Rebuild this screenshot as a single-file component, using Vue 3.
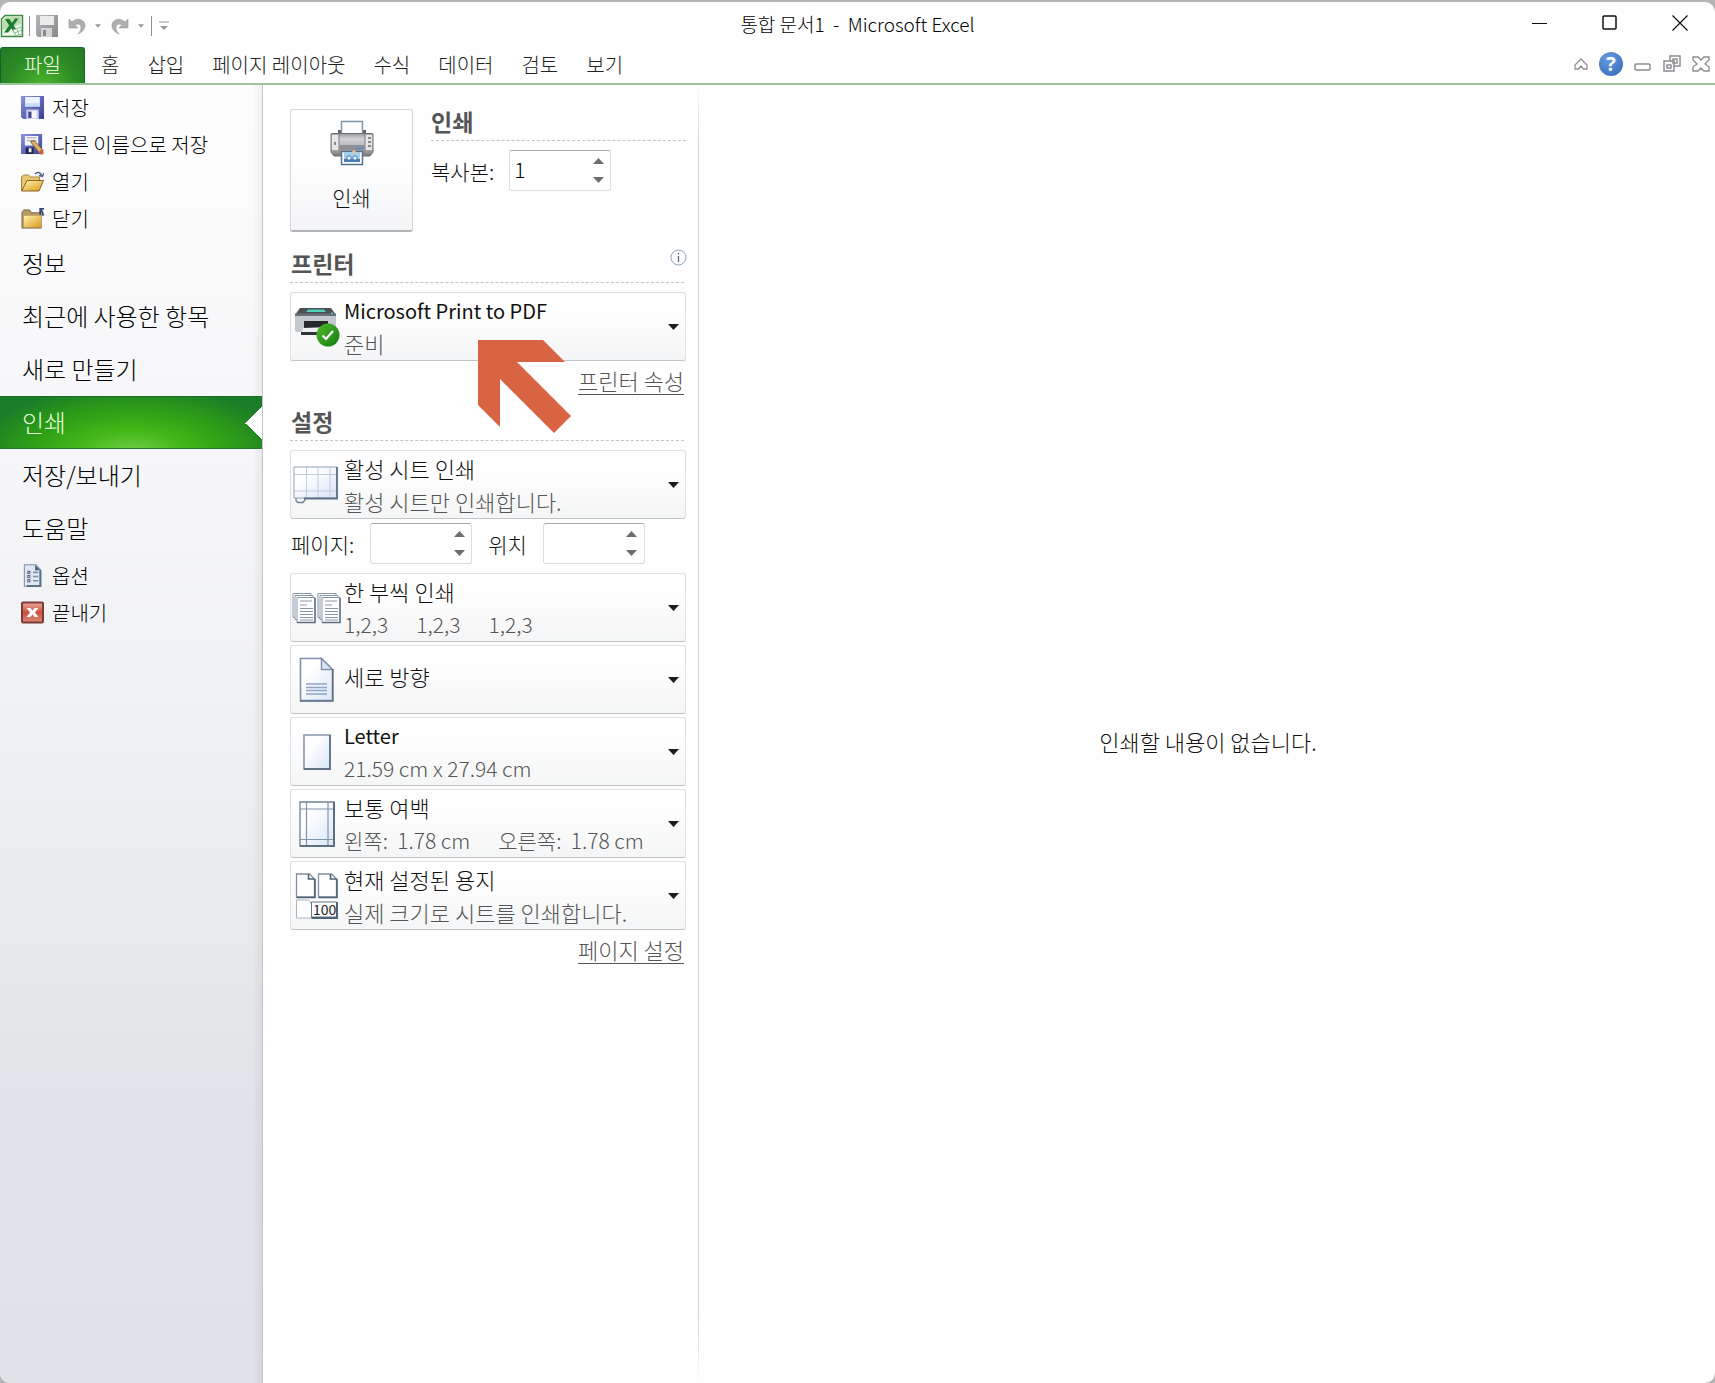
<script setup>
import { ref } from 'vue'

const tabs = ['홈', '삽입', '페이지 레이아웃', '수식', '데이터', '검토', '보기']

const fileActions = [
  { icon: 'save', label: '저장' },
  { icon: 'save-as', label: '다른 이름으로 저장' },
  { icon: 'open', label: '열기' },
  { icon: 'close-file', label: '닫기' }
]
const places = ['정보', '최근에 사용한 항목', '새로 만들기', '인쇄', '저장/보내기', '도움말']
const appActions = [
  { icon: 'options', label: '옵션' },
  { icon: 'exit', label: '끝내기' }
]
const active = ref('인쇄')

const pickers = [
  { icon: 'collate', title: '한 부씩 인쇄', parts: ['1,2,3', '1,2,3', '1,2,3'], latinDetail: true },
  { icon: 'portrait', title: '세로 방향', parts: [] },
  { icon: 'letter', title: 'Letter', parts: ['21.59 cm x 27.94 cm'], latinTitle: true, latinDetail: true },
  { icon: 'margins', title: '보통 여백', parts: ['왼쪽:  1.78 cm', '오른쪽:  1.78 cm'], latinDetail: true },
  { icon: 'scaling', title: '현재 설정된 용지', parts: ['실제 크기로 시트를 인쇄합니다.'] }
]

const copies = ref('1')
const pageFrom = ref('')
const pageTo = ref('')
const step = (value, by) => String(Math.max(1, (parseInt(value) || 0) + by))
</script>

<template>
  <div class="desktop">
    <svg class="defs" width="0" height="0" aria-hidden="true">
      <defs>
        <linearGradient id="g-blue" x1="0" y1="0" x2="1" y2="1"><stop offset="0" stop-color="#8c93e0" /><stop offset="1" stop-color="#3a3f94" /></linearGradient>
        <linearGradient id="g-grey" x1="0" y1="0" x2="1" y2="1"><stop offset="0" stop-color="#b9b6ba" /><stop offset="1" stop-color="#8b888c" /></linearGradient>
        <linearGradient id="g-gold" x1="0" y1="0" x2="1" y2="1"><stop offset="0" stop-color="#fff3b0" /><stop offset="1" stop-color="#dd9a1c" /></linearGradient>
        <linearGradient id="g-paper" x1="0" y1="0" x2="1" y2="1"><stop offset="0.3" stop-color="#ffffff" /><stop offset="1" stop-color="#d9e5f8" /></linearGradient>
        <linearGradient id="g-metal" x1="0" y1="0" x2="0" y2="1"><stop offset="0" stop-color="#9a9b9e" /><stop offset="0.25" stop-color="#d3d3d5" /><stop offset="0.7" stop-color="#a9aaad" /><stop offset="1" stop-color="#77787c" /></linearGradient>
        <linearGradient id="g-red" x1="0" y1="0" x2="0" y2="1"><stop offset="0" stop-color="#eda79c" /><stop offset="0.5" stop-color="#c9523f" /><stop offset="1" stop-color="#e08a78" /></linearGradient>
        <linearGradient id="g-ok" x1="0" y1="0" x2="1" y2="1"><stop offset="0" stop-color="#4fbb2c" /><stop offset="1" stop-color="#157a12" /></linearGradient>
      </defs>
      <symbol id="excel" viewBox="0 0 24 24">
        <path d="M5 1.5h17.5v21h-21V5z" fill="#eef7ea" stroke="#3f8a45" stroke-width="1.5" />
        <path d="M6 3h15v7L3 16V6z" fill="#b9dfae" />
        <path d="M5 5h4.5l2.500 4 3-4.500h3.500l-5 7 5.500 7h-4.800l-3-4.200-3 4.200H4l5.200-7z" fill="#1e7a2e" />
        <path d="m13 16 8-3 1 7-6 2z" fill="#fff" stroke="#8cc08a" />
        <path d="m14 19 8-3M17 15l2 6" stroke="#8cc08a" />
      </symbol>
      <symbol id="floppy-grey" viewBox="0 0 22 22">
        <path d="M0 0h22v22H2l-2-2z" fill="url(#g-grey)" />
        <path d="M4 1h14v9H4z" fill="#eceaed" /><path d="M5 13h11v9H5z" fill="#d6d4d8" /><path d="M7 15h3v6H7z" fill="#8b888c" />
      </symbol>
      <symbol id="undo" viewBox="0 0 18 18">
        <path d="M1 2v9h9l-3-3c3-2 6-.5 6 2.500 0 2.500-1 4.500-3 6.500 4-1.500 7-4.500 7-8.500C17 2.500 9 0 4 5z" fill="#b1aeb2" stroke="#9a979b" stroke-width=".6" />
      </symbol>
      <symbol id="save" viewBox="0 0 22 22">
        <path d="M0 0h22v22H2l-2-2z" fill="url(#g-blue)" />
        <path d="M4 1h14v9H4z" fill="#eef4ff" /><path d="M4 7h14v3H4z" fill="#c8dbf7" />
        <path d="M5 13h12v9H5z" fill="#c9cde8" /><path d="M10 14h5v7h-5z" fill="#f6f7fc" /><path d="M7 15h3v6H7z" fill="#44498f" />
      </symbol>
      <symbol id="save-as" viewBox="0 0 24 22">
        <path d="M0 0h22v21H0z" fill="url(#g-blue)" />
        <path d="M4 2h14v10H4z" fill="#f4f4f8" /><path d="M6 4h10M6 7h10" stroke="#9aa0b4" />
        <path d="M5 14h8v7H5z" fill="#20244a" /><path d="M8 15h3v4H8z" fill="#e8eaf4" />
        <path d="m10 8 4-1 9 10-3 4z" fill="#d9b36a" stroke="#80602c" /><path d="m19 18 3-2 2 4-3 2z" fill="#c0604f" />
      </symbol>
      <symbol id="open" viewBox="0 0 23 21">
        <path d="M.5 20V6l2-2h5l2 2h9v4" fill="#e8c871" stroke="#a58543" />
        <path d="M.7 20 6 9.500h16.500L18 20z" fill="url(#g-gold)" stroke="#8a6420" />
        <path d="M14 3c3-3 6-1 7 2m-3-.5 3.500 1L23 2" fill="none" stroke="#51648c" stroke-width="1.400" />
      </symbol>
      <symbol id="close-file" viewBox="0 0 24 22">
        <path d="M1 21V4l2-2h6l2 3h10v16z" fill="#b49a63" stroke="#7c6b46" /><path d="M3 8h18v12H3z" fill="url(#g-gold)" />
        <path d="M23 8c0-4-1-5-3-6m0 5V1h4" fill="none" stroke="#35466f" stroke-width="1.800" />
      </symbol>
      <symbol id="options" viewBox="0 0 17 22">
        <path d="M.7.700H12l4.300 5v15.600H.700z" fill="#dfe7f0" stroke="#7f90a6" /><path d="M16 6v15H3" fill="none" stroke="#5d7188" stroke-width="2" />
        <path d="M11 1v5h5z" fill="#4a5c74" />
        <g fill="none" stroke="#55687f"><rect x="4" y="7" width="2" height="2" /><rect x="4" y="11" width="2" height="2" /><rect x="4" y="15" width="2" height="2" /></g>
        <path d="M9 8h5M9 12h5M9 16h5" stroke="#7f90a6" stroke-width="1.500" />
      </symbol>
      <symbol id="exit" viewBox="0 0 23 22">
        <rect x="1" y="1" width="21" height="20" rx="1" fill="url(#g-red)" stroke="#7d3d36" stroke-width="2" />
        <path d="M5.500 6.500h4l2 2.500 2-2.500h4L14 11l3.500 4.500h-4l-2-2.500-2 2.500h-4L9 11z" fill="#fff" />
      </symbol>
      <symbol id="printer" viewBox="0 0 44 46">
        <path d="M8 10h4v6H8zM32 10h4v6h-4z" fill="#5f6468" />
        <path d="M11.500 1.500h21V16h-21z" fill="#fbfdff" stroke="#7f95a6" stroke-width="1.500" />
        <path d="M2 13.500h40q1 0 1 1V32l-3 4H4l-3-4V14.500q0-1 1-1z" fill="url(#g-metal)" stroke="#6d7073" />
        <path d="M2 15h7v15H2zM35 15h7v15h-7z" fill="#e6e6e8" /><path d="M9 14v17M35 14v17" stroke="#77797d" />
        <path d="M10 25h24v5H10z" fill="#909195" /><path d="M26 27h8v2h-8z" fill="#658fc2" />
        <path d="M4 22h2v3H4zM38 17h3v2h-3zM38 21h3v2h-3zM38 25h3v2h-3z" fill="#85878b" />
        <path d="M11.500 31.500h21v13h-21z" fill="#fff" stroke="#54708c" stroke-width="1.500" />
        <path d="M14 32h16v10H14z" fill="#9fd0ef" /><path d="M14 39h16v3H14z" fill="#4a7ab5" />
        <circle cx="19" cy="38" r="2.200" fill="#e8f4fc" stroke="#4a7ab5" /><circle cx="25" cy="38" r="2.200" fill="#e8f4fc" stroke="#4a7ab5" /><circle cx="24" cy="32" r="1.800" fill="#f3c2a2" />
      </symbol>
      <symbol id="device" viewBox="0 0 46 40">
        <path d="M6 1h31l5 7H1z" fill="#4b5054" /><path d="M14 2.500h16l2 2.500H12z" fill="#4fd0b8" />
        <path d="M1 8h41v15q0 2-2 2H3q-2 0-2-2z" fill="#c3c9cf" /><path d="M1 6.500h41V9H1z" fill="#6a7076" /><path d="M37 5.500h2v1.500h-2z" fill="#4be08a" />
        <path d="M10 14h24v10H10z" fill="#26292c" /><path d="m9 21 27-1v4l-29 4z" fill="#eef1f4" /><path d="M7 25h26v3H7z" fill="#303438" />
        <circle cx="34" cy="28" r="11.500" fill="url(#g-ok)" /><path d="m28.500 28.500 3.500 3.500 7-8" fill="none" stroke="#fff" stroke-width="2.200" />
      </symbol>
      <symbol id="sheet" viewBox="0 0 46 38">
        <path d="M3 32v3l2 1.500h5l2-2.500v-2" fill="#f4f8fd" stroke="#6c8096" stroke-width="1.300" />
        <path d="M1 1h43v31H1z" fill="url(#g-paper)" stroke="#8fa2b8" />
        <path d="M1 8.500h43M1 25h43M13.500 1v31M25 1v31M37 1v31" stroke="#bccbdf" />
        <path d="M44 1v31.500H11" fill="none" stroke="#5d7188" stroke-width="1.800" />
      </symbol>
      <symbol id="collate" viewBox="0 0 50 32">
        <g v-for="x in [0, 25]" :key="x" fill="#fff" stroke="#8797a8">
          <path :d="`M${x + 1} 1.500h18v24h-18z`" />
          <path :d="`M${x + 3} 3.500h18v24h-18z`" />
          <path :d="`M${x + 5} 5.500h18v25h-18z`" />
          <path :d="`M${x + 23} 6v24.500h-18`" fill="none" stroke="#5c6d7e" stroke-width="1.400" />
          <path :d="`M${x + 8} 9h12M${x + 8} 13h7M${x + 8} 16.500h13M${x + 8} 19.500h13M${x + 8} 22.500h13M${x + 8} 25.500h13M${x + 8} 28h13`" />
        </g>
      </symbol>
      <symbol id="portrait" viewBox="0 0 36 46">
        <path d="M1.500 1.500h21l11 11v31h-32z" fill="url(#g-paper)" stroke="#8090ac" stroke-width="1.600" />
        <path d="M22.500 1.500v11h11z" fill="#dbe5f2" stroke="#8090ac" stroke-width="1.400" />
        <path d="M33.800 12v32H1" fill="none" stroke="#5f7086" stroke-width="1.600" />
        <path d="M7 27h21M7 30.500h21M7 33.500h21M7 37h21" stroke="#8fa3cb" stroke-width="1.400" />
      </symbol>
      <symbol id="letter" viewBox="0 0 28 36">
        <path d="M1 1h26v34H1z" fill="url(#g-paper)" stroke="#8797ae" stroke-width="1.600" /><path d="M27 1v34H1" fill="none" stroke="#61728a" stroke-width="1.800" />
      </symbol>
      <symbol id="margins" viewBox="0 0 36 46">
        <path d="M1 1h34v44H1z" fill="url(#g-paper)" stroke="#6f8296" stroke-width="1.300" /><path d="M7.500 1v44M29 1v44M1 8h34M1 38.500h34" stroke="#8094aa" stroke-width="1.200" />
        <path d="M35 1v44H1" fill="none" stroke="#4c5f73" stroke-width="1.600" />
      </symbol>
      <symbol id="scaling" viewBox="0 0 43 46">
        <g v-for="x in [0, 22]" :key="x">
          <path :d="`M${x + 1} 1h13l5 5v18h-18z`" fill="#fff" stroke="#8090a2" stroke-width="1.300" />
          <path :d="`M${x + 19.5} 6v18.500h-18.500M${x + 13} 1v5h6`" fill="none" stroke="#4f6376" stroke-width="1.600" />
        </g>
        <path d="M1 45V27h12l3 4v14z" fill="#fff" stroke="#a9b4bf" /><path d="M16 29h25v15H16z" fill="#fff" stroke="#61778a" /><path d="M41.500 29v16H16" fill="none" stroke="#4f6376" stroke-width="2" />
      </symbol>
      <symbol id="spin-up" viewBox="0 0 11 6"><path d="M0 6 5.500 0 11 6z" fill="#6d6d6d" /></symbol>
      <symbol id="caret" viewBox="0 0 11 6"><path d="M0 0h11L5.500 6z" fill="currentColor" /></symbol>
    </svg>

    <div class="window">
      <header class="titlebar">
        <div class="quick">
          <svg class="i24"><use href="#excel" /></svg>
          <i class="bar"></i>
          <button class="plain" aria-label="저장"><svg class="i22"><use href="#floppy-grey" /></svg></button>
          <button class="plain" aria-label="실행 취소"><svg class="i18"><use href="#undo" /></svg></button>
          <svg class="mini"><use href="#caret" /></svg>
          <button class="plain flip" aria-label="다시 실행"><svg class="i18"><use href="#undo" /></svg></button>
          <svg class="mini"><use href="#caret" /></svg>
          <i class="bar last"></i>
          <button class="plain" aria-label="빠른 실행 도구 모음 사용자 지정">
            <svg width="10" height="10" viewBox="0 0 10 10"><path d="M0 1h10" stroke="#999" /><path d="M1 5h8L5 9z" fill="#999" /></svg>
          </button>
        </div>
        <h1>통합 문서1&nbsp; -&nbsp; Microsoft Excel</h1>
        <div class="controls">
          <button class="plain" aria-label="최소화"><svg width="16" height="16"><path d="M0 8.500h15" stroke="#111" /></svg></button>
          <button class="plain" aria-label="최대화"><svg width="16" height="16"><rect x="1" y="1" width="13" height="13" rx="1" fill="none" stroke="#111" stroke-width="1.500" /></svg></button>
          <button class="plain" aria-label="닫기"><svg width="16" height="16"><path d="m.5.500 15 15m0-15-15 15" stroke="#111" stroke-width="1.200" /></svg></button>
        </div>
      </header>

      <nav class="ribbon">
        <button class="file">파일</button>
        <button v-for="tab in tabs" :key="tab" class="tab">{{ tab }}</button>
        <div class="tools">
          <button class="plain" aria-label="리본 최소화"><svg width="14" height="14"><path d="M1 12V8l6-6 6 6v4H9.500L7 9l-2.500 3z" fill="#fff" stroke="#8e8e93" stroke-width="1.300" /></svg></button>
          <button class="help" aria-label="도움말">?</button>
          <button class="plain" aria-label="창 최소화"><svg width="18" height="18"><rect x="1" y="9" width="15" height="6" rx="1" fill="#fff" stroke="#8e8e93" stroke-width="1.500" /></svg></button>
          <button class="plain" aria-label="창 복원"><svg width="18" height="18"><g fill="#fff" stroke="#8e8e93" stroke-width="1.500"><path d="M7 1h10v10H7z" /><path d="M10 4h4v4h-4zM1 6h10v10H1z" /><path d="M4 10h4v3H4z" /></g></svg></button>
          <button class="plain" aria-label="창 닫기"><svg width="18" height="16"><path d="M1 1h5l3 3 3-3h5v3l-4 4 4 3v4h-5l-3-3-3 3H1v-4l4-3-4-4z" fill="#fff" stroke="#8e8e93" stroke-width="1.400" /></svg></button>
        </div>
      </nav>

      <div class="backstage">
        <nav class="side">
          <button v-for="a in fileActions" :key="a.icon" class="small">
            <svg><use :href="'#' + a.icon" /></svg>{{ a.label }}
          </button>
          <button v-for="p in places" :key="p" class="place" :class="{ active: active === p }" @click="active = p">{{ p }}</button>
          <div class="app-actions">
            <button v-for="a in appActions" :key="a.icon" class="small">
              <svg><use :href="'#' + a.icon" /></svg>{{ a.label }}
            </button>
          </div>
        </nav>

        <section class="settings">
          <div class="print-row">
            <button class="print"><svg width="44" height="46"><use href="#printer" /></svg>인쇄</button>
            <div class="print-side">
              <h2>인쇄</h2>
              <div class="field">
                <label for="copies">복사본:</label>
                <div class="spin">
                  <input id="copies" v-model="copies" type="text" inputmode="numeric" />
                  <div class="arrows">
                    <button aria-label="늘리기" @click="copies = step(copies, 1)"><svg><use href="#spin-up" /></svg></button>
                    <button aria-label="줄이기" @click="copies = step(copies, -1)"><svg class="down"><use href="#spin-up" /></svg></button>
                  </div>
                </div>
              </div>
            </div>
          </div>

          <div class="head">
            <h2>프린터</h2>
            <svg class="info" width="17" height="17"><circle cx="8.500" cy="8.500" r="7.500" fill="#fff" stroke="#8ba3c0" /><path d="M8.500 7v6M8.500 4v1.500" stroke="#4b6a92" stroke-width="1.300" /></svg>
          </div>
          <div class="picker">
            <svg class="pic"><use href="#device" width="46" height="40" x="2" y="7" /></svg>
            <div class="words">
              <select class="latin" aria-label="프린터"><option>Microsoft Print to PDF</option></select>
              <p>준비</p>
            </div>
            <svg class="caret"><use href="#caret" /></svg>
          </div>
          <div class="link-row"><a href="#printer-properties">프린터 속성</a></div>

          <div class="head"><h2>설정</h2></div>
          <div class="picker">
            <svg class="pic"><use href="#sheet" width="46" height="38" x="1" y="8" /></svg>
            <div class="words">
              <select aria-label="인쇄 대상"><option>활성 시트 인쇄</option></select>
              <p>활성 시트만 인쇄합니다.</p>
            </div>
            <svg class="caret"><use href="#caret" /></svg>
          </div>
          <div class="pages">
            <label for="from">페이지:</label>
            <div class="spin">
              <input id="from" v-model="pageFrom" type="text" inputmode="numeric" />
              <div class="arrows">
                <button aria-label="늘리기" @click="pageFrom = step(pageFrom, 1)"><svg><use href="#spin-up" /></svg></button>
                <button aria-label="줄이기" @click="pageFrom = step(pageFrom, -1)"><svg class="down"><use href="#spin-up" /></svg></button>
              </div>
            </div>
            <label for="to">위치</label>
            <div class="spin">
              <input id="to" v-model="pageTo" type="text" inputmode="numeric" />
              <div class="arrows">
                <button aria-label="늘리기" @click="pageTo = step(pageTo, 1)"><svg><use href="#spin-up" /></svg></button>
                <button aria-label="줄이기" @click="pageTo = step(pageTo, -1)"><svg class="down"><use href="#spin-up" /></svg></button>
              </div>
            </div>
          </div>
          <div class="stack">
            <div v-for="p in pickers" :key="p.icon" class="picker">
              <svg class="pic" :class="p.icon">
                <use :href="'#' + p.icon" />
                <text v-if="p.icon === 'scaling'" x="21" y="42" font-size="14" font-weight="400" fill="#222">100</text>
              </svg>
              <div class="words" :class="{ single: !p.parts.length }">
                <select :aria-label="p.title" :class="{ latin: p.latinTitle }"><option>{{ p.title }}</option></select>
                <p v-if="p.parts.length" :class="{ figures: p.latinDetail }"><span v-for="(part, i) in p.parts" :key="i">{{ part }}</span></p>
              </div>
              <svg class="caret"><use href="#caret" /></svg>
            </div>
          </div>
          <div class="link-row"><a href="#page-setup">페이지 설정</a></div>

          <svg class="pointer" width="93" height="93" viewBox="0 0 93 93" aria-hidden="true">
            <path d="M0 0h65l22 22H39l54 54-17 17-54-54v48L0 65z" fill="#d86444" />
          </svg>
        </section>

        <main class="preview"><p>인쇄할 내용이 없습니다.</p></main>
      </div>
    </div>
  </div>
</template>

<style>
body { margin: 0; background: #b5b5b5; }
</style>

<style scoped>
.desktop {
  min-height: 100vh;
  box-sizing: border-box;
  padding-top: 2px;
  display: flex;
  background: #b5b5b5;
  font-family: "Noto Sans CJK KR", "Noto Sans", sans-serif;
  font-weight: 300;
  font-size: 22px;
  color: #111;
}
.defs { position: absolute; }
.window {
  flex: 1;
  min-width: 0;
  display: flex;
  flex-direction: column;
  background: #fefefe;
  border-radius: 10px;
  overflow: hidden;
}
button { font: inherit; color: inherit; margin: 0; padding: 0; border: 0; background: none; }
h1, h2, p { margin: 0; }
.plain { display: flex; }

.titlebar { display: grid; grid-template-columns: 1fr auto 1fr; align-items: center; height: 45px; }
.quick { display: flex; align-items: center; padding-top: 2px; color: #9a9a9a; }
.i24 { width: 24px; height: 24px; }
.i22 { width: 22px; height: 22px; }
.i18 { width: 18px; height: 18px; }
.bar { width: 1px; height: 20px; margin: 0 6px 0 5px; background: #8f8f8f; }
.quick .plain + .plain { margin-left: 10px; }
.flip { transform: scaleX(-1); }
.mini { width: 6px; height: 4px; margin: 0 10px 0 9px; }
.bar.last { margin: 0 7px 0 -3px; }
h1 { padding-bottom: 2px; font-size: 19px; font-weight: 300; color: #000; }
.controls { display: flex; justify-content: flex-end; gap: 54px; padding: 0 27px 4px 0; }

.ribbon { display: flex; align-items: stretch; height: 36px; border-bottom: 2px solid #9dc59b; font-size: 20px; color: #222; }
.file {
  width: 85px;
  padding-bottom: 2px;
  color: #f2ffec;
  border: 1px solid #17622a;
  border-bottom: 0;
  border-radius: 3px 3px 0 0;
  background: radial-gradient(ellipse at 50% 110%, #4cb62c, #2b8a25 60%, #237a26);
}
.tab { padding: 0 14px 2px; white-space: nowrap; }
.file + .tab { padding-left: 16px; }
.tools { margin-left: auto; display: flex; align-items: center; gap: 11px; padding: 0 5px 2px 0; }
.help {
  width: 24px;
  height: 24px;
  border-radius: 50%;
  background: radial-gradient(circle at 40% 30%, #6a9ce0, #2f66b8);
  color: #fff;
  font: 700 20px/24px "Open Sans", sans-serif;
}

.backstage { flex: 1; display: flex; }
.side {
  flex: none;
  width: 262px;
  padding-top: 4px;
  border-right: 1px solid #c4c7ca;
  background: linear-gradient(90deg, transparent 96%, rgba(0, 0, 0, 0.05)), linear-gradient(#fdfdfe, #f1f2f4 45%, #e0e3e7 80%, #dfe2e6);
  display: flex;
  flex-direction: column;
  color: #000;
}
.small { height: 37px; display: flex; align-items: center; gap: 8px; padding-left: 21px; font-size: 20px; }
.small svg { width: 23px; height: 23px; }
.place { height: 53px; padding: 0 0 2px 22px; text-align: left; font-size: 24px; }
.place.active {
  color: #e6ffdb;
  background:
    conic-gradient(from 45deg at 0 50%, #fefefe 90deg, transparent 0) right center / 17px 34px no-repeat,
    radial-gradient(ellipse 60% 130% at 50% 110%, #76d04c, #42b717 35%, #2b9a18 70%, #1b7d28);
  box-shadow: inset 0 1px #1c6b25, inset 0 -1px #1f7a2c;
}
.app-actions { padding-top: 2px; display: flex; flex-direction: column; }

.settings {
  position: relative;
  flex: none;
  width: 396px;
  padding: 24px 12px 0 27px;
  border-right: 1px solid;
  border-image: linear-gradient(transparent, #d0d0d0 5%, #d0d0d0 94%, transparent) 1;
}
h2 { font-size: 23px; line-height: 38px; font-weight: 700; color: #555; }
.print-row { display: flex; gap: 18px; }
.print {
  width: 123px;
  height: 123px;
  display: flex;
  flex-direction: column;
  align-items: center;
  gap: 15px;
  padding-top: 10px;
  border: 1px solid #d4d5d7;
  border-bottom: 2px solid #b3b4b6;
  border-radius: 3px;
  background: linear-gradient(#fff 40%, #f3f4f6);
  font-size: 21px;
  line-height: 32px;
}
.print-side { flex: 1; }
.print-side h2 { margin-top: -7px; border-bottom: 1px dashed #c4c4c4; }
.field { display: flex; align-items: center; gap: 15px; padding-top: 9px; font-size: 21px; }
.spin {
  width: 102px;
  height: 41px;
  box-sizing: border-box;
  display: flex;
  border: 1px solid #dcdddf;
  border-top-color: #a9a9ab;
  border-radius: 3px;
  background: #fff;
}
.spin input { flex: 1; min-width: 0; padding: 0 0 3px 4px; border: 0; outline: 0; background: none; font: inherit; color: #000; }
.arrows { display: flex; flex-direction: column; width: 24px; }
.arrows button { flex: 1; display: flex; align-items: center; justify-content: center; }
.arrows svg { width: 11px; height: 6px; }
.down { transform: scaleY(-1); }

.head { display: flex; justify-content: space-between; height: 42px; align-items: flex-end; margin: 8px 2px 9px 0; padding-left: 1px; border-bottom: 1px dashed #c4c4c4; }
.info { margin: 0 -3px 16px 0; }
.picker {
  height: 69px;
  box-sizing: border-box;
  display: flex;
  align-items: center;
  border: 1px solid #dfe0e2;
  border-bottom-color: #c2c4c6;
  border-radius: 3px;
  background: linear-gradient(#fefefe 30%, #f4f5f6);
}
.pic { flex: none; width: 50px; height: 54px; margin: 0 2px 0 1px; }
.words { flex: 1; min-width: 0; }
.words.single { padding-bottom: 8px; }
select { display: block; width: 100%; height: 32px; padding: 0; border: 0; outline: 0; appearance: none; background: none; font: inherit; font-size: 22px; color: #111; }
select.latin { font-size: 20px; font-weight: 400; }
.words p { height: 32px; margin-top: 1px; line-height: 32px; color: #555; white-space: pre; display: flex; gap: 28px; }
.words .figures { font-size: 21px; }
.caret { flex: none; width: 11px; height: 6px; margin: 0 6px; color: #1c1c1c; }
.collate { height: 32px; }
.portrait, .margins, .scaling { height: 46px; }
.letter { height: 36px; }
.link-row { display: flex; justify-content: flex-end; padding: 5px 2px 0 0; }
.link-row a { line-height: 28px; color: #555; text-decoration: none; border-bottom: 1px solid #555; }
.link-row + .head { height: 33px; margin-top: 12px; }
.pages { display: flex; align-items: center; gap: 16px; padding: 4px 0 9px 1px; font-size: 21px; }
.stack { display: flex; flex-direction: column; gap: 3px; }
.pointer { position: absolute; left: 215px; top: 255px; }

.preview { flex: 1; display: flex; align-items: center; justify-content: center; padding: 14px 0 0 2px; }
</style>
